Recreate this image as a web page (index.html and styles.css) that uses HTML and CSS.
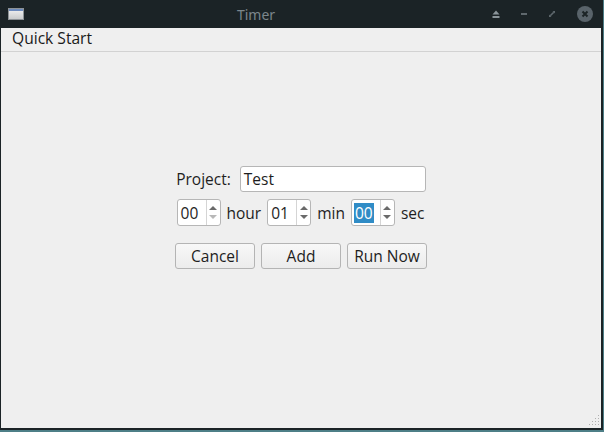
FILE: index.html
```html
<!DOCTYPE html>
<html>
<head>
<meta charset="utf-8">
<link rel="stylesheet" href="styles.css">
</head>
<body>
<div class="frame">
  <div class="titlebar">
    <div class="app-icon"><div class="app-icon-top"></div></div>
    <div class="title">Timer</div>
    <div class="controls">
      <svg class="ctl" width="12" height="12" viewBox="0 0 12 12"><path d="M6 2.5 L9.5 6.5 L2.5 6.5 Z" fill="#8a9499"/><rect x="2.5" y="8" width="7" height="2" fill="#8a9499"/></svg>
      <svg class="ctl" width="12" height="12" viewBox="0 0 12 12"><rect x="3" y="5" width="6" height="2" fill="#5f686d"/></svg>
      <svg class="ctl" width="12" height="12" viewBox="0 0 12 12"><path d="M6.5 3 H9 V5.5 Z M5.5 9 H3 V6.5 Z" fill="#5f686d"/><path d="M4.2 7.8 L7.8 4.2" stroke="#5f686d" stroke-width="1.6"/></svg>
      <div class="close"><svg width="16" height="16" viewBox="0 0 16 16"><path d="M5.5 5.5 L10.5 10.5 M10.5 5.5 L5.5 10.5" stroke="#1c2426" stroke-width="2"/></svg></div>
    </div>
  </div>
  <div class="client">
    <div class="menubar"><span class="menu-item">Quick Start</span></div>
    <div class="content">
      <div class="form">
        <div class="row">
          <span class="label">Project:</span>
          <div class="input">Test</div>
        </div>
        <div class="row row-time">
          <div class="spin"><span class="spin-val">00</span><div class="arrows"><span class="up"></span><span class="down disabled"></span></div></div>
          <span class="unit">hour</span>
          <div class="spin"><span class="spin-val">01</span><div class="arrows"><span class="up"></span><span class="down"></span></div></div>
          <span class="unit">min</span>
          <div class="spin focus"><span class="spin-val"><span class="sel">00</span></span><div class="arrows"><span class="up"></span><span class="down"></span></div></div>
          <span class="unit">sec</span>
        </div>
        <div class="row row-buttons">
          <button class="btn">Cancel</button>
          <button class="btn">Add</button>
          <button class="btn">Run Now</button>
        </div>
      </div>
      <div class="grip">
        <svg width="12" height="12" viewBox="0 0 12 12" fill="#b0b0b0">
          <rect x="10" y="0" width="1" height="1"/>
          <rect x="7" y="3" width="1" height="1"/><rect x="10" y="3" width="1" height="1"/>
          <rect x="4" y="6" width="1" height="1"/><rect x="7" y="6" width="1" height="1"/><rect x="10" y="6" width="1" height="1"/>
          <rect x="1" y="9" width="1" height="1"/><rect x="4" y="9" width="1" height="1"/><rect x="7" y="9" width="1" height="1"/><rect x="10" y="9" width="1" height="1"/>
        </svg>
      </div>
    </div>
  </div>
</div>
</body>
</html>
```
FILE: styles.css
```css
* { box-sizing: border-box; }
html, body { margin: 0; padding: 0; }
body {
  width: 604px;
  height: 432px;
  background: #4e7f87;
  font-family: "Open Sans", "Noto Sans", sans-serif;
  overflow: hidden;
}
.frame {
  width: 603px;
  height: 430px;
  background: #1b2326;
  display: flex;
  flex-direction: column;
}
.titlebar {
  height: 28px;
  display: flex;
  align-items: center;
  flex: none;
}
.app-icon {
  margin-left: 8px;
  width: 16px;
  height: 12px;
  background: linear-gradient(#f2f2f2, #c9cbcc);
  border: 1px solid #8d9296;
}
.app-icon-top {
  height: 2px;
  background: #6d8bbd;
}
.title {
  flex: 1;
  text-align: center;
  color: #7b868c;
  font-size: 14px;
  padding-left: 148px;
  padding-right: 150px;
  font-family: "Noto Sans", sans-serif;
}
.controls {
  display: flex;
  align-items: center;
  margin-right: 10px;
}
.ctl { margin-left: 16px; display: block; }
.ctl:first-child { margin-left: 0; }
.close {
  margin-left: 19px;
  width: 16px;
  height: 16px;
  border-radius: 50%;
  background: #59636a;
}
.close svg { display: block; }
.client {
  flex: 1;
  margin: 0 2px 2px 1px;
  background: #efefef;
  display: flex;
  flex-direction: column;
}
.menubar {
  height: 24px;
  border-bottom: 1px solid #d2d2d2;
  display: flex;
  align-items: center;
  padding-left: 11px;
  padding-bottom: 3px;
  flex: none;
}
.menu-item {
  font-size: 15.6px;
  color: #1a1a1a;
}
.content {
  flex: 1;
  position: relative;
  padding-top: 114px;
}
.form {
  display: flex;
  flex-direction: column;
  align-items: center;
  font-size: 15.5px;
  color: #1e1e1e;
}
.row {
  display: flex;
  align-items: center;
}
.label { margin-right: 9px; }
.input {
  width: 186px;
  height: 26px;
  background: #fff;
  border: 1px solid #b6b6b6;
  border-radius: 3px;
  padding-left: 3px;
  line-height: 24px;
}
.row-time { margin-top: 7px; margin-left: -1px; }
.spin {
  width: 44px;
  height: 27px;
  background: #fff;
  border: 1px solid #b6b6b6;
  border-radius: 3px;
  display: flex;
  align-items: center;
}
.spin-val {
  flex: 1;
  padding-left: 3px;
  line-height: 20px;
}
.sel {
  background: #308cc6;
  color: #fff;
  display: inline-block;
  padding: 0 1px;
  margin-left: -1px;
}
.arrows {
  width: 14px;
  height: 100%;
  border-left: 1px solid #d5d5d5;
  display: flex;
  flex-direction: column;
  align-items: center;
  justify-content: center;
  gap: 5px;
}
.up, .down {
  width: 0; height: 0;
  border-left: 4px solid transparent;
  border-right: 4px solid transparent;
}
.up { border-bottom: 4px solid #6a6a6a; }
.down { border-top: 4px solid #6a6a6a; }
.down.disabled { border-top-color: #b8b8b8; }
.unit { margin: 0 6px; }
.unit:last-child { margin-right: 0; }
.row-buttons { margin-top: 17px; gap: 6px; }
.btn {
  width: 80px;
  height: 26px;
  font: inherit;
  color: #1e1e1e;
  background: linear-gradient(#f8f8f8, #ececec);
  border: 1px solid #b4b4b4;
  border-radius: 3px;
  padding: 0;
}
.grip {
  position: absolute;
  right: 1px;
  bottom: 1px;
}
.grip svg { display: block; }
```
